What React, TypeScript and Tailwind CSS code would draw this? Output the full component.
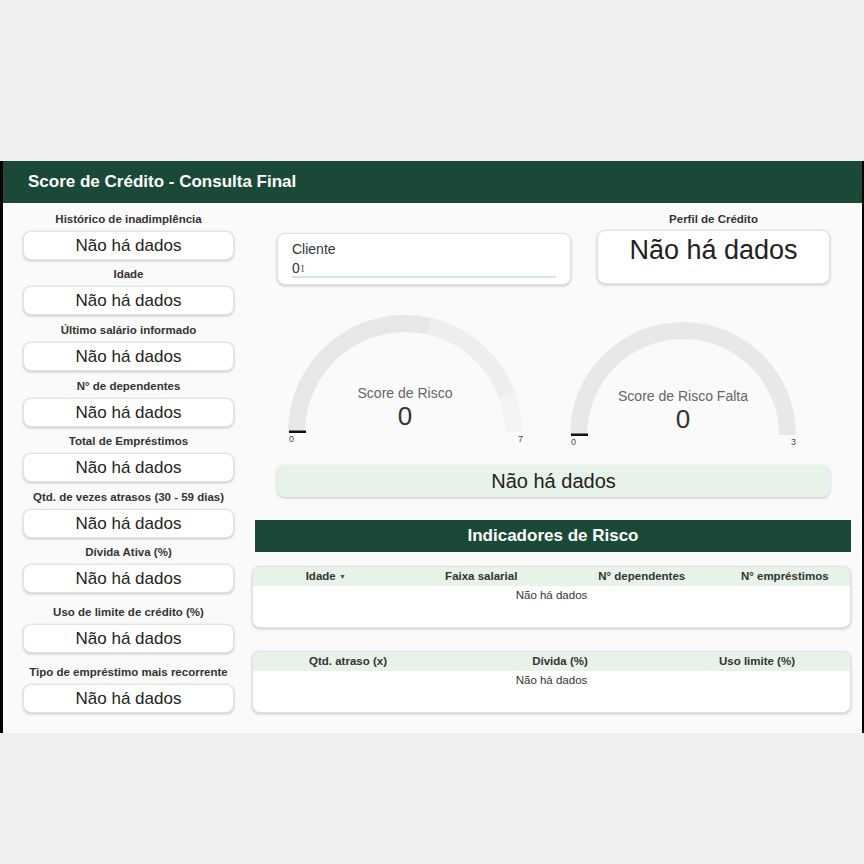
import React from "react";

const FONT = { fontFamily: '"Liberation Sans", Arial, sans-serif' };

const leftItems: { label: string; mt: string }[] = [
  { label: "Histórico de inadimplência", mt: "mt-[9px]" },
  { label: "Idade", mt: "mt-[7px]" },
  { label: "Último salário informado", mt: "mt-[8px]" },
  { label: "N° de dependentes", mt: "mt-[8px]" },
  { label: "Total de Empréstimos", mt: "mt-[7px]" },
  { label: "Qtd. de vezes atrasos (30 - 59 dias)", mt: "mt-[8px]" },
  { label: "Dívida Ativa (%)", mt: "mt-[7px]" },
  { label: "Uso de limite de crédito (%)", mt: "mt-[12px]" },
  { label: "Tipo de empréstimo mais recorrente", mt: "mt-[12px]" },
];

const card =
  "bg-white border border-[#e2e2e2] rounded-[8px] shadow-[0_1px_3px_rgba(0,0,0,0.22)]";

function pt(cx: number, cy: number, r: number, deg: number) {
  const a = (deg * Math.PI) / 180;
  return `${(cx + r * Math.cos(a)).toFixed(2)} ${(cy - r * Math.sin(a)).toFixed(2)}`;
}

function arc(cx: number, cy: number, r: number, from: number, to: number) {
  return `M ${pt(cx, cy, r, from)} A ${r} ${r} 0 0 1 ${pt(cx, cy, r, to)}`;
}

export default function App() {
  return (
    <div className="w-[864px] h-[864px] bg-[#efefef] flex flex-col" style={FONT}>
      <div className="h-[161px] shrink-0" />
      <div className="h-[572px] shrink-0 bg-[#fafafa] border-l-[3px] border-r-2 border-black flex flex-col">
        <div className="h-[42px] bg-[#1a4a37] flex items-center pl-[25px]">
          <span className="text-white font-bold text-[17px]">Score de Crédito - Consulta Final</span>
        </div>
        <div className="flex">
          {/* left column */}
          <div className="w-[249px] shrink-0 pl-[20px] flex flex-col">
            {leftItems.map((it) => (
              <div key={it.label} className={`${it.mt} w-[211px] flex flex-col`}>
                <div className="h-[14px] leading-[14px] text-center text-[11.5px] font-bold text-[#333]">
                  {it.label}
                </div>
                <div className={`${card} mt-[5px] h-[29px] flex items-center justify-center text-[17px] text-[#222]`}>
                  Não há dados
                </div>
              </div>
            ))}
          </div>

          {/* right column */}
          <div className="w-[599px] shrink-0 flex flex-col">
            <div className="flex items-start">
              <div className={`${card} ml-[25px] mt-[30px] w-[294px] h-[52px] pl-[14px] pr-[14px] pt-[7px]`}>
                <div className="text-[14px] leading-[16px] text-[#333]">Cliente</div>
                <div className="mt-[3px] h-[18px] flex items-center border-b-2 border-[#d3e3f7] text-[14px] text-[#333]">
                  <span>0</span>
                  <span className="text-[11px] text-[#666] ml-[1px]" style={{ fontFamily: '"Liberation Serif", serif' }}>I</span>
                </div>
              </div>
              <div className="ml-[26px] w-[233px] flex flex-col">
                <div className="mt-[9px] h-[14px] leading-[14px] text-center text-[11.5px] font-bold text-[#333]">
                  Perfil de Crédito
                </div>
                <div className={`${card} mt-[4px] h-[54px] pt-[3px] text-center text-[27px] leading-[32px] text-[#222]`}>
                  Não há dados
                </div>
              </div>
            </div>

            {/* gauges */}
            <div className="flex mt-[20px]">
              <div className="relative ml-[28px] w-[250px] h-[145px]">
                <svg width="250" height="145" className="absolute left-0 top-0">
                  <path d={arc(125, 127, 108.5, 180, 77)} stroke="#e7e7e7" strokeWidth="17" fill="none" />
                  <path d={arc(125, 127, 108.5, 77, 20)} stroke="#eeeeee" strokeWidth="17" fill="none" />
                  <path d={arc(125, 127, 108.5, 20, 0)} stroke="#f3f3f3" strokeWidth="17" fill="none" />
                  <rect x="9" y="125.5" width="17" height="2.5" fill="#111" />
                </svg>
                <div className="absolute left-[125px] top-[80px] -translate-x-1/2 flex flex-col items-center whitespace-nowrap">
                  <span className="text-[14px] leading-[16px] text-[#666]">Score de Risco</span>
                  <span className="text-[26px] leading-[30px] text-[#333]">0</span>
                </div>
                <span className="absolute left-[9px] top-[129px] text-[9px] leading-[10px] text-[#444]">0</span>
                <span className="absolute left-[238px] top-[129px] text-[9px] leading-[10px] text-[#444]">7</span>
              </div>
              <div className="relative ml-[32px] w-[250px] h-[145px]">
                <svg width="250" height="145" className="absolute left-0 top-0">
                  <path d={arc(121, 130, 104.5, 180, 0)} stroke="#e8e8e8" strokeWidth="17" fill="none" />
                  <rect x="9" y="128.5" width="17" height="2.5" fill="#111" />
                </svg>
                <div className="absolute left-[121px] top-[83px] -translate-x-1/2 flex flex-col items-center whitespace-nowrap">
                  <span className="text-[14px] leading-[16px] text-[#666]">Score de Risco Falta</span>
                  <span className="text-[26px] leading-[30px] text-[#333]">0</span>
                </div>
                <span className="absolute left-[9px] top-[132px] text-[9px] leading-[10px] text-[#444]">0</span>
                <span className="absolute left-[229px] top-[132px] text-[9px] leading-[10px] text-[#444]">3</span>
              </div>
            </div>

            <div className="mt-[15px] ml-[25px] w-[553px] h-[32px] bg-[#e7f2e8] rounded-[8px] shadow-[0_1px_3px_rgba(0,0,0,0.22)] flex items-center justify-center text-[20px] text-[#222]">
              Não há dados
            </div>

            <div className="mt-[23px] ml-[3px] w-[596px] h-[32px] bg-[#1a4a37] flex items-center justify-center">
              <span className="text-white font-bold text-[17px]">Indicadores de Risco</span>
            </div>

            <div className={`${card} mt-[14px] w-[599px] h-[62px] overflow-hidden`}>
              <div className="h-[19px] bg-[#e7f2e8] flex items-center text-[11.5px] font-bold text-[#333]">
                <div className="w-[146px] text-center">
                  Idade <span className="text-[7px] align-middle text-[#555]">▼</span>
                </div>
                <div className="w-[166px] text-center">Faixa salarial</div>
                <div className="w-[156px] text-center">N° dependentes</div>
                <div className="w-[131px] text-center">N° empréstimos</div>
              </div>
              <div className="h-[20px] flex items-center justify-center text-[11.5px] text-[#333]">Não há dados</div>
            </div>

            <div className={`${card} mt-[23px] w-[599px] h-[62px] overflow-hidden`}>
              <div className="h-[19px] bg-[#e7f2e8] flex items-center text-[11.5px] font-bold text-[#333]">
                <div className="w-[190px] text-center">Qtd. atraso (x)</div>
                <div className="w-[234px] text-center">Dívida (%)</div>
                <div className="w-[160px] text-center">Uso limite (%)</div>
              </div>
              <div className="h-[20px] flex items-center justify-center text-[11.5px] text-[#333]">Não há dados</div>
            </div>
          </div>
        </div>
      </div>
      <div className="flex-1" />
    </div>
  );
}
